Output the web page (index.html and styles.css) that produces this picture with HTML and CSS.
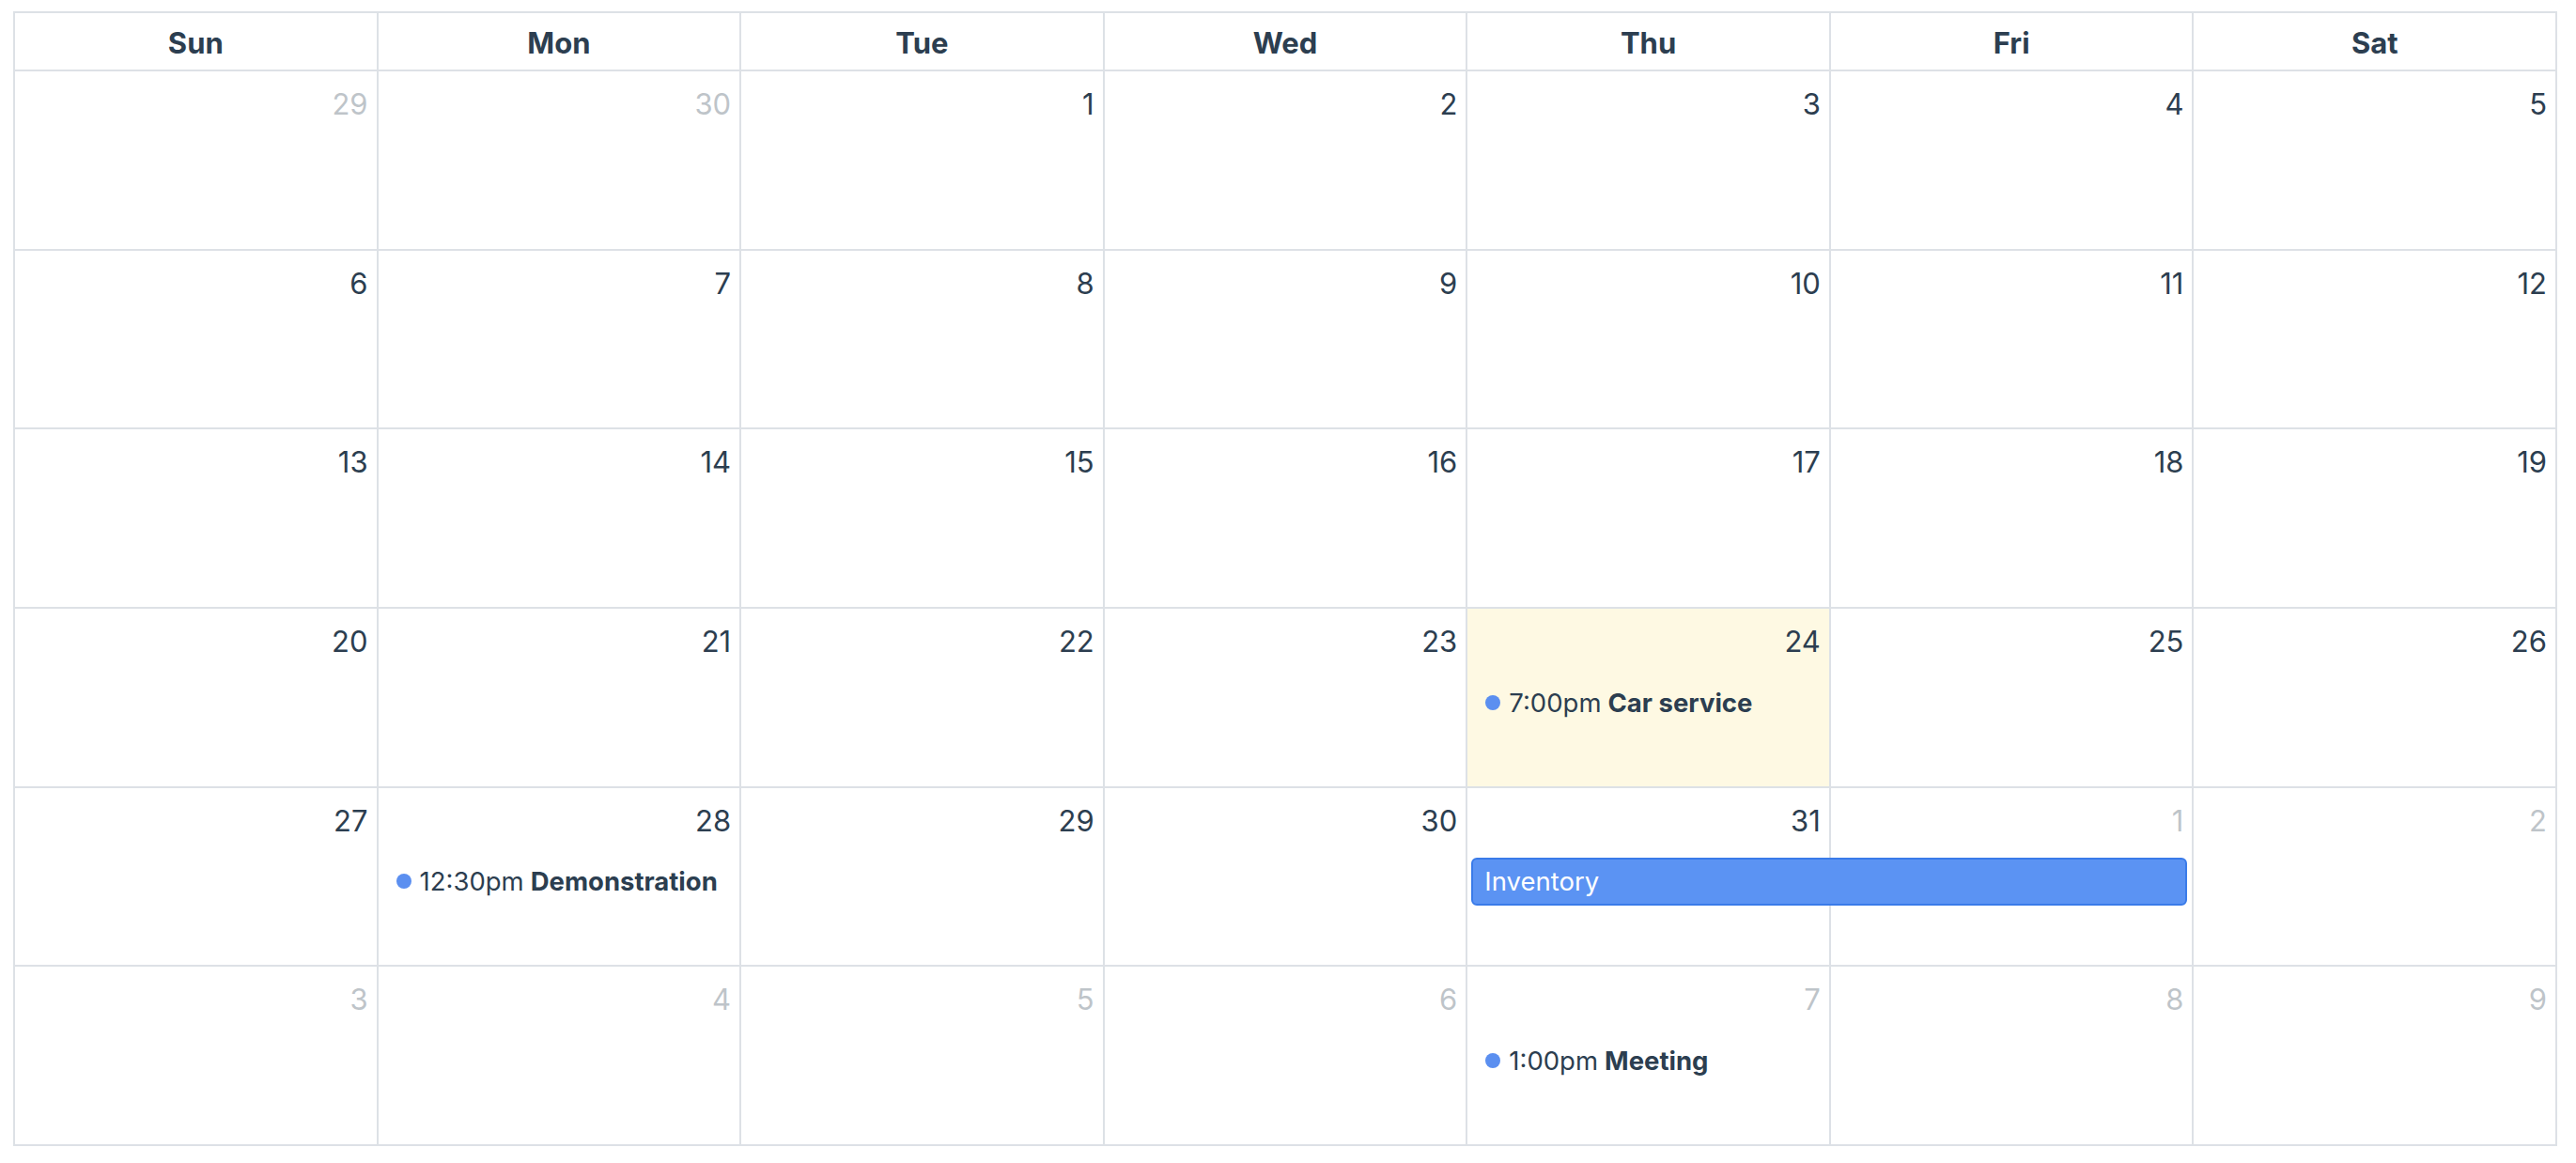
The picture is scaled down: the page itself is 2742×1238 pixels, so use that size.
FILE: index.html
```html
<!DOCTYPE html>
<html lang="en">
<head>
    <meta charset="UTF-8">
    <meta name="viewport" content="width=device-width, initial-scale=1.0">
    <title>Month Calendar</title>
    <link rel="stylesheet" href="styles.css">
</head>
<body>
    <div class="calendar">
        <!-- Weekday header -->
        <div class="cal-head">
            <div class="head-cell">Sun</div>
            <div class="head-cell">Mon</div>
            <div class="head-cell">Tue</div>
            <div class="head-cell">Wed</div>
            <div class="head-cell">Thu</div>
            <div class="head-cell">Fri</div>
            <div class="head-cell">Sat</div>
        </div>

        <!-- Weeks -->
        <div class="cal-body">
            <div class="week">
                <div class="day other"><span class="day-num">29</span></div>
                <div class="day other"><span class="day-num">30</span></div>
                <div class="day"><span class="day-num">1</span></div>
                <div class="day"><span class="day-num">2</span></div>
                <div class="day"><span class="day-num">3</span></div>
                <div class="day"><span class="day-num">4</span></div>
                <div class="day"><span class="day-num">5</span></div>
            </div>

            <div class="week">
                <div class="day"><span class="day-num">6</span></div>
                <div class="day"><span class="day-num">7</span></div>
                <div class="day"><span class="day-num">8</span></div>
                <div class="day"><span class="day-num">9</span></div>
                <div class="day"><span class="day-num">10</span></div>
                <div class="day"><span class="day-num">11</span></div>
                <div class="day"><span class="day-num">12</span></div>
            </div>

            <div class="week">
                <div class="day"><span class="day-num">13</span></div>
                <div class="day"><span class="day-num">14</span></div>
                <div class="day"><span class="day-num">15</span></div>
                <div class="day"><span class="day-num">16</span></div>
                <div class="day"><span class="day-num">17</span></div>
                <div class="day"><span class="day-num">18</span></div>
                <div class="day"><span class="day-num">19</span></div>
            </div>

            <div class="week">
                <div class="day"><span class="day-num">20</span></div>
                <div class="day"><span class="day-num">21</span></div>
                <div class="day"><span class="day-num">22</span></div>
                <div class="day"><span class="day-num">23</span></div>
                <div class="day today"><span class="day-num">24</span></div>
                <div class="day"><span class="day-num">25</span></div>
                <div class="day"><span class="day-num">26</span></div>
                <div class="event dot-event col-thu">
                    <span class="event-dot"></span>
                    <span class="event-time">7:00pm</span>
                    <span class="event-title">Car service</span>
                </div>
            </div>

            <div class="week">
                <div class="day"><span class="day-num">27</span></div>
                <div class="day"><span class="day-num">28</span></div>
                <div class="day"><span class="day-num">29</span></div>
                <div class="day"><span class="day-num">30</span></div>
                <div class="day"><span class="day-num">31</span></div>
                <div class="day other"><span class="day-num">1</span></div>
                <div class="day other"><span class="day-num">2</span></div>
                <div class="event dot-event col-mon">
                    <span class="event-dot"></span>
                    <span class="event-time">12:30pm</span>
                    <span class="event-title">Demonstration</span>
                </div>
                <div class="event block-event col-thu span-2">Inventory</div>
            </div>

            <div class="week">
                <div class="day other"><span class="day-num">3</span></div>
                <div class="day other"><span class="day-num">4</span></div>
                <div class="day other"><span class="day-num">5</span></div>
                <div class="day other"><span class="day-num">6</span></div>
                <div class="day other"><span class="day-num">7</span></div>
                <div class="day other"><span class="day-num">8</span></div>
                <div class="day other"><span class="day-num">9</span></div>
                <div class="event dot-event col-thu">
                    <span class="event-dot"></span>
                    <span class="event-time">1:00pm</span>
                    <span class="event-title">Meeting</span>
                </div>
            </div>
        </div>
    </div>
</body>
</html>
```

FILE: styles.css
```css
/* Base */
* {
    margin: 0;
    padding: 0;
    box-sizing: border-box;
}

body {
    font-family: 'Inter', 'Liberation Sans', sans-serif;
    color: #2c3e50;
    background-color: #fff;
}

/* Calendar frame */
.calendar {
    --line: #dde1e6;
    margin: 12px 20px 0 14px;
    height: 1208px;
    display: flex;
    flex-direction: column;
    border-top: 2px solid var(--line);
    border-left: 2px solid var(--line);
}

/* Weekday header */
.cal-head {
    display: grid;
    grid-template-columns: repeat(7, minmax(0, 1fr));
    height: 62px;
}

.head-cell {
    display: flex;
    align-items: center;
    justify-content: center;
    padding-top: 2px;
    font-size: 31px;
    font-weight: 700;
    border-right: 2px solid var(--line);
    border-bottom: 2px solid var(--line);
}

/* Weeks */
.cal-body {
    flex: 1;
    display: flex;
    flex-direction: column;
}

.week {
    flex: 1;
    display: grid;
    grid-template-columns: repeat(7, minmax(0, 1fr));
    grid-template-rows: 74px 51px 1fr;
}

.day {
    grid-row: 1 / -1;
    display: flex;
    justify-content: flex-end;
    align-items: flex-start;
    border-right: 2px solid var(--line);
    border-bottom: 2px solid var(--line);
}

/* Pin each day to its weekday column */
.day:nth-child(1) { grid-column: 1; }
.day:nth-child(2) { grid-column: 2; }
.day:nth-child(3) { grid-column: 3; }
.day:nth-child(4) { grid-column: 4; }
.day:nth-child(5) { grid-column: 5; }
.day:nth-child(6) { grid-column: 6; }
.day:nth-child(7) { grid-column: 7; }

.day-num {
    font-size: 31px;
    font-weight: 400;
    line-height: 36px;
    padding: 17px 9px 0 0;
}

.day.other .day-num {
    opacity: 0.3;
}

.day.today {
    background-color: #fef9e3;
}

/* Events */
.event {
    grid-row: 2;
    display: flex;
    align-items: center;
    font-size: 27.5px;
    white-space: nowrap;
    overflow: hidden;
}

.col-mon { grid-column: 2; }
.col-thu { grid-column: 5; }
.col-thu.span-2 { grid-column: 5 / span 2; }

.dot-event {
    padding-left: 19px;
}

.event-dot {
    width: 16px;
    height: 16px;
    border-radius: 50%;
    background-color: #5b8ff0;
    margin-right: 9px;
    flex-shrink: 0;
}

.event-time {
    margin-right: 7px;
}

.event-title {
    font-weight: 700;
}

.block-event {
    margin: 0 7px 0 4px;
    padding: 0 12px;
    background-color: #5b93f3;
    border: 2px solid #3a7be9;
    border-radius: 6px;
    color: #fff;
}
```
